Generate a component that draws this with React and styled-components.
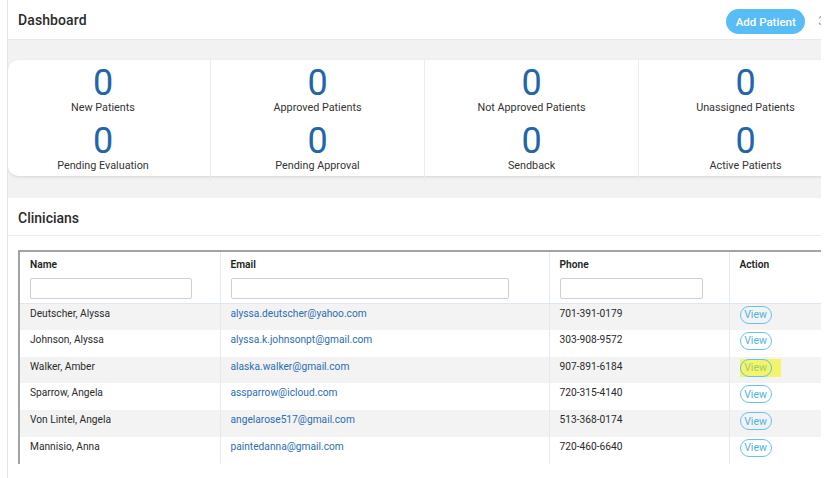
import React from "react";
import styled, { createGlobalStyle } from "styled-components";

const Global = createGlobalStyle`
  html, body { margin: 0; padding: 0; background: #fff; }
  body { font-family: Roboto, "Liberation Sans", Arial, sans-serif; color: #333; }
  * { box-sizing: border-box; }
`;

const Frame = styled.div`
  margin-left: 7px;
  width: 814px;
  height: 478px;
  border-left: 1px solid #e4e4e4;
  overflow: hidden;
  background: #f2f2f2;
`;

const Inner = styled.div`
  width: 880px;
  display: flex;
  flex-direction: column;
`;

const Header = styled.header`
  height: 40px;
  background: #fff;
  display: flex;
  align-items: center;
  padding-left: 10px;
  border-bottom: 1px solid #e9e9e9;
`;

const Title = styled.h1`
  margin: 0;
  font-size: 14px;
  font-weight: 500;
  color: #2b2b2b;
  letter-spacing: 0.1px;
  margin-top: 1px;
`;

const HeaderRight = styled.div`
  margin-left: auto;
  display: flex;
  align-items: center;
  gap: 13px;
  padding-right: 63px;
`;

const AddButton = styled.button`
  height: 25px;
  width: 79px;
  border: none;
  border-radius: 13px;
  background: #59bdf5;
  color: #fff;
  font-family: inherit;
  font-size: 11.5px;
  font-weight: 500;
  padding: 0;
  margin-top: 4px;
`;

const Cut = styled.span`
  font-size: 12px;
  color: #999;
  margin-top: 2px;
`;

const StatsCard = styled.section`
  margin-top: 20px;
  height: 116px;
  background: #fff;
  border-radius: 10px 0 0 10px;
  box-shadow: 0 1px 3px rgba(0, 0, 0, 0.12);
  display: grid;
  grid-template-columns: 202px 214px 214px 214px;
`;

const StatCol = styled.div`
  display: flex;
  flex-direction: column;
  align-items: center;
  padding-right: ${(p) => (p.first ? 12 : 0)}px;
  border-left: ${(p) => (p.first ? "none" : "1px solid #ececec")};
  padding-top: 5px;
`;

const Stat = styled.div`
  display: flex;
  flex-direction: column;
  align-items: center;
  height: 58px;
`;

const Num = styled.div`
  font-size: 36px;
  line-height: 37px;
  color: #2365ad;
  font-weight: 400;
`;

const Label = styled.div`
  font-size: 10.8px;
  line-height: 13px;
  color: #333;
  margin-top: -1px;
`;

const Panel = styled.section`
  margin-top: 22px;
  background: #fff;
  height: 300px;
`;

const PanelHead = styled.div`
  height: 38px;
  display: flex;
  align-items: center;
  padding-left: 10px;
  border-bottom: 1px solid #ececec;
`;

const PanelTitle = styled.h2`
  margin: 0;
  font-size: 14px;
  font-weight: 500;
  color: #2b2b2b;
  padding-top: 2px;
`;

const TableWrap = styled.div`
  margin: 14px 0 0 10px;
  border-top: 2px solid #a3a3a3;
  border-left: 2px solid #a3a3a3;
`;

const Table = styled.table`
  border-collapse: collapse;
  table-layout: fixed;
  width: 860px;
  font-size: 10.2px;
`;

const Th = styled.th`
  text-align: left;
  vertical-align: top;
  font-weight: 600;
  color: #222;
  padding: 7px 10px 0 10px;
  height: 51px;
  border-left: ${(p) => (p.first ? "none" : "1px solid #e3ebf2")};
  border-bottom: 1px solid #dce8f1;
`;

const FilterInput = styled.input`
  display: block;
  margin-top: 8px;
  width: ${(p) => p.w}px;
  height: 21px;
  border: 1px solid #cfcfcf;
  border-radius: 2px;
  background: #fff;
`;

const Tr = styled.tr`
  background: ${(p) => (p.odd ? "#f3f3f3" : "#fff")};
`;

const Td = styled.td`
  height: 26.8px;
  vertical-align: top;
  padding: ${(p) => (p.action ? "2px 10px 0 10px" : "4px 10px 0 10px")};
  color: #2a2a2a;
  border-left: ${(p) => (p.first ? "none" : "1px solid #e3ebf2")};
  white-space: nowrap;
`;

const Email = styled.a`
  color: #2c6db3;
  text-decoration: none;
`;

const Highlight = styled.span`
  display: inline-block;
  background: ${(p) => (p.on ? "#f4f46c" : "transparent")};
  padding-right: ${(p) => (p.on ? 9 : 0)}px;
`;

const ViewButton = styled.button`
  width: 32px;
  height: 18px;
  border: 1.5px solid #62c3ee;
  border-radius: 10px;
  background: transparent;
  color: ${(p) => (p.on ? "#9bcf6a" : "#4fb2e2")};
  font-family: inherit;
  font-size: 10.5px;
  padding: 0;
  display: block;
`;

const stats = [
  ["New Patients", "Pending Evaluation"],
  ["Approved Patients", "Pending Approval"],
  ["Not Approved Patients", "Sendback"],
  ["Unassigned Patients", "Active Patients"],
];

const rows = [
  ["Deutscher, Alyssa", "alyssa.deutscher@yahoo.com", "701-391-0179"],
  ["Johnson, Alyssa", "alyssa.k.johnsonpt@gmail.com", "303-908-9572"],
  ["Walker, Amber", "alaska.walker@gmail.com", "907-891-6184", true],
  ["Sparrow, Angela", "assparrow@icloud.com", "720-315-4140"],
  ["Von Lintel, Angela", "angelarose517@gmail.com", "513-368-0174"],
  ["Mannisio, Anna", "paintedanna@gmail.com", "720-460-6640"],
];

export default function App() {
  return (
    <>
      <Global />
      <Frame>
        <Inner>
          <Header>
            <Title>Dashboard</Title>
            <HeaderRight>
              <AddButton>Add Patient</AddButton>
              <Cut>3</Cut>
            </HeaderRight>
          </Header>
          <StatsCard>
            {stats.map((s, i) => (
              <StatCol key={i} first={i === 0}>
                {s.map((l) => (
                  <Stat key={l}>
                    <Num>0</Num>
                    <Label>{l}</Label>
                  </Stat>
                ))}
              </StatCol>
            ))}
          </StatsCard>
          <Panel>
            <PanelHead>
              <PanelTitle>Clinicians</PanelTitle>
            </PanelHead>
            <TableWrap>
              <Table>
                <colgroup>
                  <col style={{ width: 200 }} />
                  <col style={{ width: 329 }} />
                  <col style={{ width: 180 }} />
                  <col style={{ width: 151 }} />
                </colgroup>
                <thead>
                  <tr>
                    <Th first>
                      Name
                      <FilterInput w={162} />
                    </Th>
                    <Th>
                      Email
                      <FilterInput w={278} />
                    </Th>
                    <Th>
                      Phone
                      <FilterInput w={143} />
                    </Th>
                    <Th>Action</Th>
                  </tr>
                </thead>
                <tbody>
                  {rows.map((r, i) => (
                    <Tr key={r[0]} odd={i % 2 === 0}>
                      <Td first>{r[0]}</Td>
                      <Td>
                        <Email href="#">{r[1]}</Email>
                      </Td>
                      <Td>{r[2]}</Td>
                      <Td action>
                        <Highlight on={r[3]}>
                          <ViewButton on={r[3]}>View</ViewButton>
                        </Highlight>
                      </Td>
                    </Tr>
                  ))}
                </tbody>
              </Table>
            </TableWrap>
          </Panel>
        </Inner>
      </Frame>
    </>
  );
}
